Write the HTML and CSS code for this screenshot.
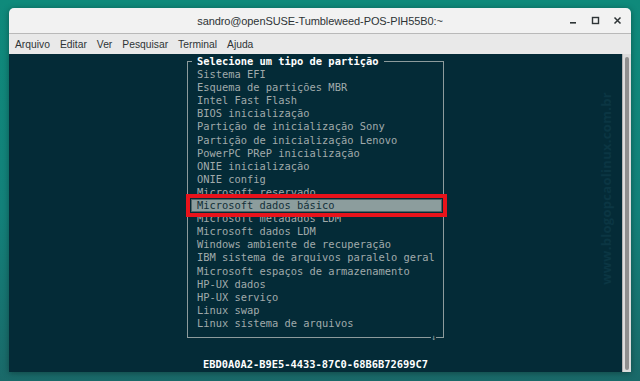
FILE: index.html
```html
<!DOCTYPE html>
<html lang="pt">
<head>
<meta charset="utf-8">
<title>Terminal</title>
<link rel="stylesheet" href="styles.css">
</head>
<body>
<div class="window">
  <div class="titlebar">
    <span class="title">sandro@openSUSE-Tumbleweed-POS-PIH55B0:~</span>
    <div class="controls">
      <svg class="ctl" width="9" height="9" viewBox="0 0 9 9"><rect x="1" y="6" width="6" height="1.6" fill="#2e3436"/></svg>
      <svg class="ctl" width="9" height="9" viewBox="0 0 9 9"><rect x="1.5" y="1.5" width="6" height="6" fill="none" stroke="#2e3436" stroke-width="1.4"/></svg>
      <svg class="ctl" width="9" height="9" viewBox="0 0 9 9"><path d="M1.5 1.5 L7.5 7.5 M7.5 1.5 L1.5 7.5" stroke="#2e3436" stroke-width="1.5"/></svg>
    </div>
  </div>
  <div class="menubar">
    <span>Arquivo</span><span>Editar</span><span>Ver</span><span>Pesquisar</span><span>Terminal</span><span>Ajuda</span>
  </div>
  <div class="term">
    <div class="screen">
      <div class="dialog">
        <div class="dialog-head"><span class="dialog-title">Selecione um tipo de partição</span></div>
        <ul class="options">
          <li>Sistema EFI</li>
          <li>Esquema de partições MBR</li>
          <li>Intel Fast Flash</li>
          <li>BIOS inicialização</li>
          <li>Partição de inicialização Sony</li>
          <li>Partição de inicialização Lenovo</li>
          <li>PowerPC PReP inicialização</li>
          <li>ONIE inicialização</li>
          <li>ONIE config</li>
          <li>Microsoft reservado</li>
          <li class="selected">Microsoft dados básico</li>
          <li>Microsoft metadados LDM</li>
          <li>Microsoft dados LDM</li>
          <li>Windows ambiente de recuperação</li>
          <li>IBM sistema de arquivos paralelo geral</li>
          <li>Microsoft espaços de armazenamento</li>
          <li>HP-UX dados</li>
          <li>HP-UX serviço</li>
          <li>Linux swap</li>
          <li>Linux sistema de arquivos</li>
        </ul>
        <span class="more">↓</span>
      </div>
      <div class="uuid">EBD0A0A2-B9E5-4433-87C0-68B6B72699C7</div>
      <div class="watermark">www.blogopcaolinux.com.br</div>
    </div>
    <div class="scrollbar"><div class="thumb"></div></div>
  </div>
</div>
</body>
</html>
```

FILE: styles.css
```css
html, body {
  margin: 0;
  padding: 0;
}
body {
  width: 640px;
  height: 381px;
  overflow: hidden;
  background: linear-gradient(180deg, #0f8a7b 0%, #13817a 55%, #1a6969 100%);
}
.window {
  margin: 8px 9px 0 9px;
  width: 622px;
  height: 364px;
  display: flex;
  flex-direction: column;
  border-radius: 5px 5px 0 0;
  overflow: hidden;
  box-shadow: 0 1px 6px rgba(0, 0, 0, 0.35);
}
.titlebar {
  height: 25px;
  flex: none;
  background: #f2f2f2;
  display: grid;
  grid-template-columns: 1fr auto 1fr;
  align-items: center;
  border-bottom: 1px solid #b9b9b9;
}
.title {
  grid-column: 2;
  font-family: "Liberation Sans", Arial, sans-serif;
  font-size: 11px;
  color: #2e3436;
  letter-spacing: -0.1px;
}
.controls {
  grid-column: 3;
  justify-self: end;
  display: flex;
  align-items: center;
  gap: 13px;
  padding-right: 9px;
}
.ctl {
  display: block;
}
.menubar {
  height: 20px;
  flex: none;
  background: #e9e9e9;
  display: flex;
  align-items: center;
  gap: 10px;
  padding-left: 6px;
  font-family: "Liberation Sans", Arial, sans-serif;
  font-size: 10.3px;
  color: #2e3436;
}
.term {
  flex: 1;
  display: flex;
  background: #042b37;
  min-height: 0;
}
.screen {
  flex: 1;
  position: relative;
  display: flex;
  flex-direction: column;
  align-items: center;
  padding-top: 7px;
  font-family: "DejaVu Sans Mono", monospace;
  font-size: 10.4px;
  line-height: 13.1px;
  overflow: hidden;
}
.dialog {
  position: relative;
  width: 251px;
  border: 1px solid #8d9b9c;
  padding: 0 1px 7px 3px;
}
.dialog-head {
  margin-top: -7px;
  height: 13.1px;
  display: flex;
}
.dialog-title {
  margin-left: 1px;
  padding: 0 6px 0 5px;
  background: #042b37;
  color: #ffffff;
  font-weight: bold;
}
.options {
  list-style: none;
  margin: 0;
  padding: 0;
  color: #a0aaab;
}
.options li {
  padding-left: 6px;
  height: 13.1px;
  white-space: nowrap;
}
.options li.selected {
  background: #8c9d9d;
  color: #133039;
  outline: 4px solid #e8131b;
  outline-offset: 1px;
  box-shadow: inset 0 0 0 1px #4f6668;
}
.more {
  position: absolute;
  right: 7px;
  bottom: -7px;
  font-size: 8px;
  line-height: 13px;
  color: #a3adad;
  background: #042b37;
}
.uuid {
  margin-top: 20px;
  color: #ffffff;
  font-weight: bold;
}
.watermark {
  position: absolute;
  right: 8px;
  top: 38px;
  writing-mode: vertical-rl;
  transform: rotate(180deg);
  font-family: "Open Sans", "Liberation Sans", sans-serif;
  font-weight: bold;
  font-size: 13px;
  line-height: 16px;
  color: #0b3643;
  letter-spacing: 0.3px;
}
.scrollbar {
  width: 8px;
  flex: none;
  background: #dcdcdc;
  border-left: 1px solid #b3b3b3;
  display: flex;
}
.thumb {
  margin: 3px 2px 2px 2px;
  flex: 1;
  background: #8e8e8e;
  border-radius: 2px;
}
```
